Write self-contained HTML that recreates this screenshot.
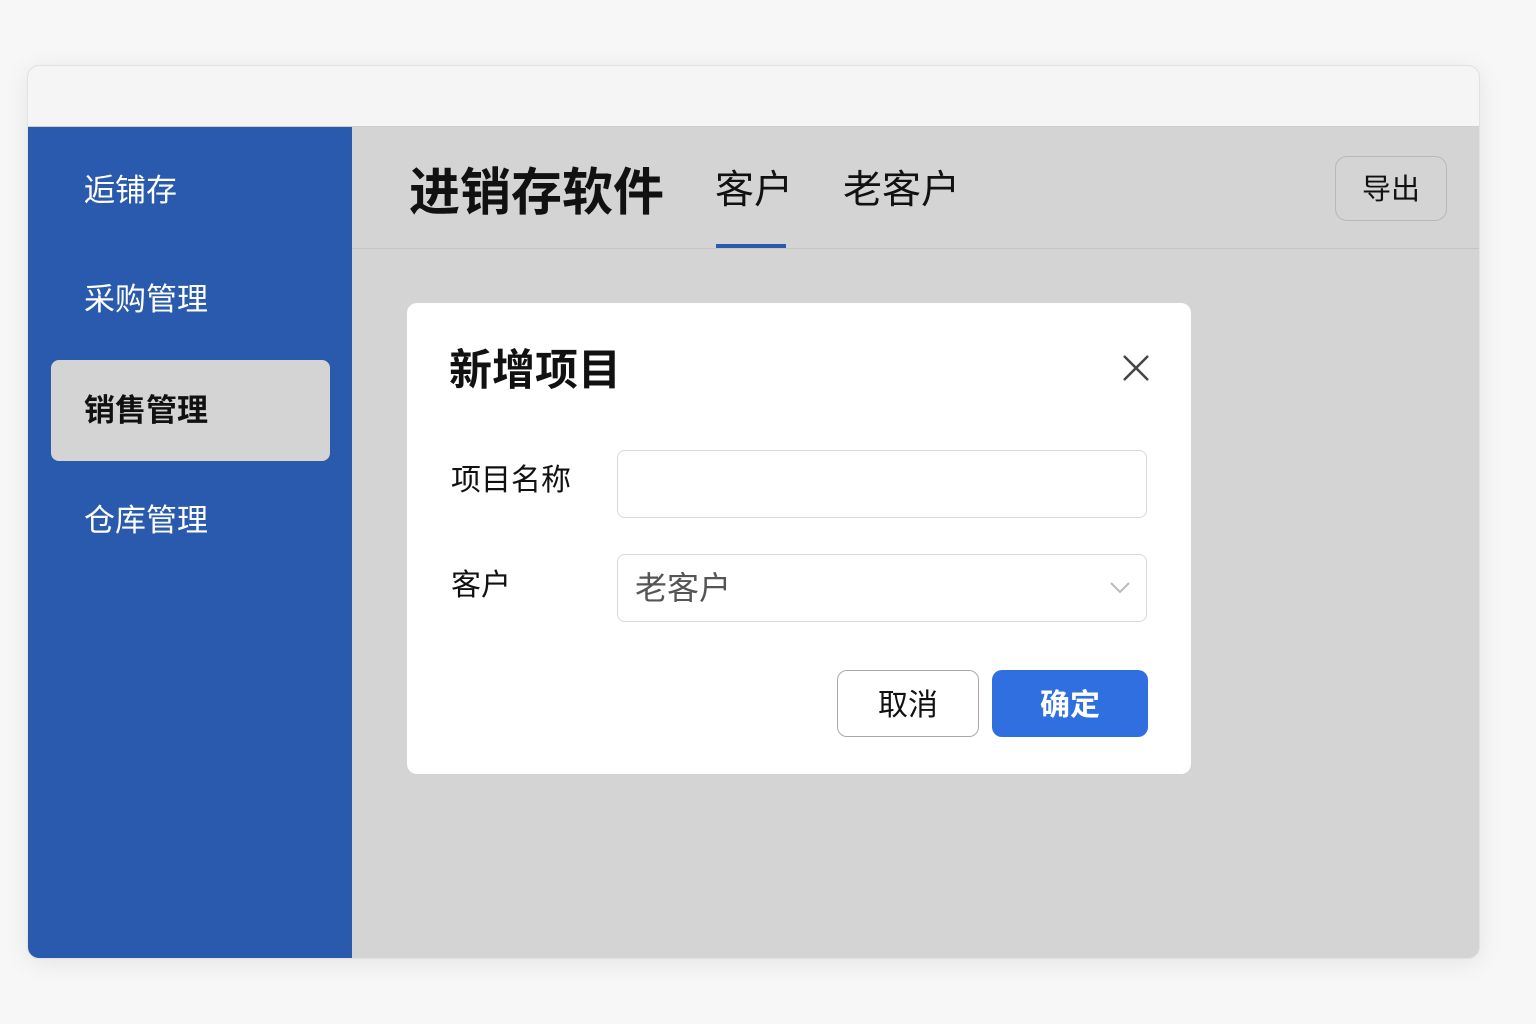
<!DOCTYPE html>
<html><head><meta charset="utf-8"><style>
*{margin:0;padding:0;box-sizing:border-box}
body{width:1536px;height:1024px;background:#f7f7f7;font-family:"Liberation Sans","Noto Sans CJK SC",sans-serif;position:relative;overflow:hidden}
.win{position:absolute;left:27px;top:65px;width:1453px;height:894px;border-radius:12px;overflow:hidden;background:#d4d4d4;box-shadow:0 4px 24px rgba(0,0,0,.08);border:1px solid #e2e2e2}
.top{position:absolute;left:0;top:0;width:100%;height:61px;background:#f5f5f5;border-bottom:1px solid #cfcfcf}
.side{position:absolute;left:0;top:61px;width:324px;bottom:0;background:#2a5aad}
.side .t{position:absolute;left:56px;color:#fff;font-size:31px;}
.side .act{position:absolute;left:23px;top:233px;width:279px;height:101px;background:#d4d4d4;border-radius:8px}
.hdr{position:absolute;left:324px;top:61px;right:0;height:122px;border-bottom:1px solid #c4c4c4}
.abs{position:absolute}
.modal{position:absolute;left:379px;top:237px;width:784px;height:471px;background:#fff;border-radius:10px}
.inp{position:absolute;left:210px;width:530px;height:68px;border:1px solid #d9d9d9;border-radius:8px}
</style></head><body>
<div class="win">
<div class="top"></div>
<div class="side">
<div class="t" style="top:38px;font-size:31px">逅铺存</div>
<div class="t" style="top:147px">采购管理</div>
<div class="act"></div>
<div class="t" style="top:258px;color:#111;font-weight:bold">销售管理</div>
<div class="t" style="top:368px">仓库管理</div>
</div>
<div class="hdr">
<div class="abs" style="left:57px;top:24px;font-size:51px;font-weight:bold;color:#111">进销存软件</div>
<div class="abs" style="left:363px;top:32px;font-size:39px;color:#111">客户</div>
<div class="abs" style="left:364px;top:117px;width:70px;height:4px;background:#2a5aad"></div>
<div class="abs" style="left:491px;top:32px;font-size:39px;color:#111">老客户</div>
<div class="abs" style="left:983px;top:29px;width:112px;height:65px;border:1px solid #b8b8b8;border-radius:12px;font-size:29px;line-height:66px;text-align:center;color:#111">导出</div>
</div>
<div class="modal">
<div class="abs" style="left:42px;top:33px;font-size:43px;font-weight:bold;color:#111">新增项目</div>
<svg class="abs" style="left:714px;top:50px" width="30" height="30" viewBox="0 0 30 30"><path d="M3 3L27 27M27 3L3 27" stroke="#444" stroke-width="2.5" fill="none"/></svg>
<div class="abs" style="left:44px;top:152px;font-size:30px;color:#111">项目名称</div>
<div class="inp" style="top:147px"></div>
<div class="abs" style="left:44px;top:257px;font-size:30px;color:#111">客户</div>
<div class="inp" style="top:251px"><span class="abs" style="left:17px;top:8px;font-size:32px;color:#555">老客户</span>
<svg class="abs" style="left:491px;top:26px" width="22" height="14" viewBox="0 0 22 14"><path d="M2 2L11 11L20 2" stroke="#bbb" stroke-width="2" fill="none"/></svg></div>
<div class="abs" style="left:430px;top:367px;width:142px;height:67px;border:1.5px solid #aaa;border-radius:10px;font-size:30px;line-height:70px;text-align:center;color:#111">取消</div>
<div class="abs" style="left:585px;top:367px;width:156px;height:67px;background:#2f6fdf;border-radius:10px;font-size:30px;line-height:72px;text-align:center;color:#fff;font-weight:bold">确定</div>
</div>
</div>
</body></html>
